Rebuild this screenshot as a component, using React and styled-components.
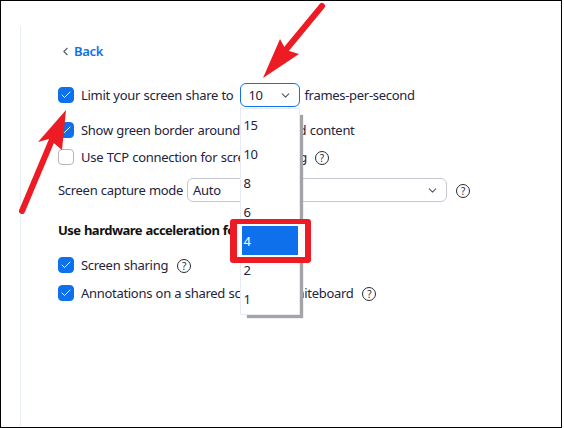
import React from 'react'
import styled, { createGlobalStyle } from 'styled-components'
import { Check, ChevronDown, ChevronLeft } from 'lucide-react'

const GlobalStyle = createGlobalStyle`
  html, body {
    margin: 0;
    padding: 0;
    background: #fff;
  }
  body {
    width: 564px;
    font-family: "Noto Sans", "Open Sans", sans-serif;
    font-size: 13px;
    letter-spacing: -0.3px;
    word-spacing: 0.4px;
    color: #232340;
  }
`

const Frame = styled.div`
  position: relative;
  box-sizing: border-box;
  width: 562px;
  height: 428px;
  padding: 25px 0 0 19px;
  border: 1px solid #000;
  overflow: hidden;
`

const Panel = styled.div`
  box-sizing: border-box;
  height: 100%;
  padding: 13px 0 0 37px;
  border-left: 1px solid #e8eef8;
`

const BackLink = styled.a`
  display: flex;
  align-items: center;
  gap: 2px;
  height: 24px;
  padding-left: 1px;
  color: #0e71eb;
  font-weight: 600;
  svg {
    color: #5a5a6e;
  }
`

const Row = styled.div`
  display: flex;
  align-items: center;
  height: 24px;
  margin-top: ${p => p.$top}px;
  white-space: nowrap;
`

const Box = styled.span`
  display: flex;
  align-items: center;
  justify-content: center;
  box-sizing: border-box;
  flex: none;
  width: 16px;
  height: 16px;
  margin-right: 7px;
  border-radius: 4px;
  border: 1px solid ${p => (p.$checked ? '#0e71eb' : '#b4b4bc')};
  background: ${p => (p.$checked ? '#0e71eb' : '#fff')};
  color: #fff;
`

const Heading = styled.div`
  font-weight: 700;
  letter-spacing: -0.5px;
  color: #111;
`

const Help = styled.span`
  display: inline-flex;
  align-items: center;
  justify-content: center;
  box-sizing: border-box;
  flex: none;
  width: 14px;
  height: 14px;
  margin: 2px 0 0 ${p => p.$left}px;
  border: 1px solid #2a2a33;
  border-radius: 50%;
  font-size: 10px;
  letter-spacing: 0;
  line-height: 1;
  color: #2a2a33;
`

const SelectBox = styled.div`
  position: relative;
  display: flex;
  align-items: center;
  justify-content: space-between;
  box-sizing: border-box;
  flex: none;
  width: ${p => p.$width}px;
  height: 24px;
  margin: 0 ${p => p.$right}px 0 ${p => p.$left}px;
  padding: 0 7px 0 ${p => p.$pad}px;
  border: 1px solid ${p => (p.$active ? '#0e71eb' : '#c6c7d2')};
  border-radius: 6px;
  background: #fff;
  svg {
    color: #55556a;
  }
`

const Menu = styled.ul`
  position: absolute;
  top: 24px;
  left: -1px;
  z-index: 2;
  box-sizing: border-box;
  width: 60px;
  height: 207px;
  margin: 0;
  padding: 1px;
  list-style: none;
  background: #fff;
  border: 1px solid #e6ebf5;
  box-shadow: 5px 5px 1px -2px #a4a4a8;
`

const Option = styled.li`
  position: relative;
  height: 29px;
  line-height: 31px;
  z-index: ${p => (p.$selected ? 1 : 'auto')};
`

const OptionLabel = styled.span`
  position: relative;
  display: block;
  height: 29px;
  padding-left: 1px;
  background: ${p => (p.$selected ? '#0e71eb' : 'transparent')};
  color: ${p => (p.$selected ? '#fff' : 'inherit')};
`

const RedBox = styled.span`
  position: absolute;
  top: -7px;
  left: -12px;
  width: 68px;
  height: 33px;
  border: solid #ed1c24;
  border-width: 5px 6px 6px 7px;
  border-radius: 3px;
  background: #fff;
`

const ArrowLayer = styled.svg`
  position: absolute;
  top: -1px;
  left: -1px;
  z-index: 3;
  width: 564px;
  height: 428px;
  pointer-events: none;
`

const Checkbox = ({ checked }) => (
  <Box $checked={checked}>{checked && <Check size={12} strokeWidth={2} />}</Box>
)

const rates = ['15', '10', '8', '6', '4', '2', '1']

const App = () => {
  return (
    <>
      <GlobalStyle />
      <Frame>
        <Panel>
          <BackLink>
            <ChevronLeft size={13} strokeWidth={2} />
            Back
          </BackLink>
          <Row $top={20}>
            <Checkbox checked />
            <span>Limit your screen share to</span>
            <SelectBox $active $width={60} $left={7} $right={4} $pad={7}>
              10
              <ChevronDown size={13} strokeWidth={2} />
              <Menu>
                {rates.map(rate => (
                  <Option key={rate} $selected={rate === '4'}>
                    {rate === '4' && <RedBox />}
                    <OptionLabel $selected={rate === '4'}>{rate}</OptionLabel>
                  </Option>
                ))}
              </Menu>
            </SelectBox>
            <span>frames-per-second</span>
          </Row>
          <Row $top={11}>
            <Checkbox checked />
            <span>Show green border around the shared content</span>
          </Row>
          <Row $top={3}>
            <Checkbox />
            <span>Use TCP connection for screen sharing</span>
            <Help $left={8}>?</Help>
          </Row>
          <Row $top={9}>
            <span>Screen capture mode</span>
            <SelectBox $width={260} $left={4} $right={0} $pad={5}>
              Auto
              <ChevronDown size={13} strokeWidth={2} />
            </SelectBox>
            <Help $left={9}>?</Help>
          </Row>
          <Row $top={16}>
            <Heading>Use hardware acceleration for:</Heading>
          </Row>
          <Row $top={11}>
            <Checkbox checked />
            <span>Screen sharing</span>
            <Help $left={9}>?</Help>
          </Row>
          <Row $top={4}>
            <Checkbox checked />
            <span>Annotations on a shared screen or whiteboard</span>
            <Help $left={9}>?</Help>
          </Row>
        </Panel>
        <ArrowLayer viewBox="0 0 564 428">
          <path d="M22 211 L54 135" stroke="#ed1c24" strokeWidth="6" strokeLinecap="round" fill="none" />
          <path d="M66 110 L38 142 L49 139 L62 150 Z" fill="#ed1c24" />
          <path d="M322 6 L284 52" stroke="#ed1c24" strokeWidth="6" strokeLinecap="round" fill="none" />
          <path d="M263 78 L280 39 L286 50 L299 54 Z" fill="#ed1c24" />
        </ArrowLayer>
      </Frame>
    </>
  )
}

export default App
